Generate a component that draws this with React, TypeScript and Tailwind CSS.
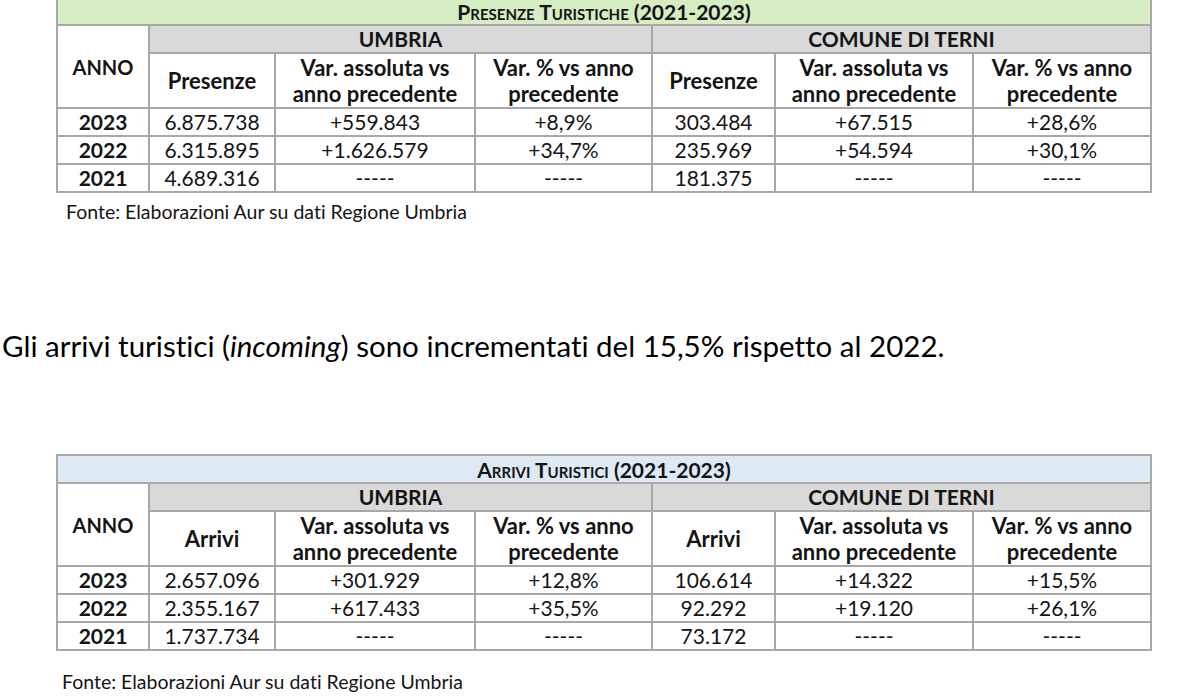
import React from 'react'

interface Row {
  anno: string
  values: string[]
}

interface TableData {
  title: string
  titleBg: string
  metric: string
  rows: Row[]
}

const presenze: TableData = {
  title: 'Presenze Turistiche (2021-2023)',
  titleBg: 'bg-[#d6ecc3]',
  metric: 'Presenze',
  rows: [
    { anno: '2023', values: ['6.875.738', '+559.843', '+8,9%', '303.484', '+67.515', '+28,6%'] },
    { anno: '2022', values: ['6.315.895', '+1.626.579', '+34,7%', '235.969', '+54.594', '+30,1%'] },
    { anno: '2021', values: ['4.689.316', '-----', '-----', '181.375', '-----', '-----'] }
  ]
}

const arrivi: TableData = {
  title: 'Arrivi Turistici (2021-2023)',
  titleBg: 'bg-[#ddeaf6]',
  metric: 'Arrivi',
  rows: [
    { anno: '2023', values: ['2.657.096', '+301.929', '+12,8%', '106.614', '+14.322', '+15,5%'] },
    { anno: '2022', values: ['2.355.167', '+617.433', '+35,5%', '92.292', '+19.120', '+26,1%'] },
    { anno: '2021', values: ['1.737.734', '-----', '-----', '73.172', '-----', '-----'] }
  ]
}

const cell = 'bg-white flex items-center justify-center text-center'

function SubHeaders({ metric }: { metric: string }) {
  return (
    <>
      <div className={`${cell} font-bold text-[22px]`}>{metric}</div>
      <div className={`${cell} font-bold text-[22px] leading-[26px]`}>
        Var. assoluta vs
        <br />
        anno precedente
      </div>
      <div className={`${cell} font-bold text-[22px] leading-[26px]`}>
        Var. % vs anno
        <br />
        precedente
      </div>
    </>
  )
}

function DataTable({ data }: { data: TableData }) {
  return (
    <div className="ml-[56px] w-[1096px] grid grid-cols-[90px_124px_198px_175px_121px_196px_176px] grid-rows-[26px_26px_53px_26px_26px_26px] gap-[2px] p-[2px] bg-[#a8a8a8] text-[21px] text-[#141414]">
      <div className={`col-span-7 ${data.titleBg} flex items-center justify-center pt-[2px] font-bold text-[21px] [font-variant:small-caps]`}>
        {data.title}
      </div>
      <div className={`${cell} row-span-2 font-bold text-[20px]`}>ANNO</div>
      <div className="col-span-3 bg-[#d9d9d9] flex items-center justify-center font-bold">UMBRIA</div>
      <div className="col-span-3 bg-[#d9d9d9] flex items-center justify-center font-bold">COMUNE DI TERNI</div>
      <SubHeaders metric={data.metric} />
      <SubHeaders metric={data.metric} />
      {data.rows.map((row) => (
        <React.Fragment key={row.anno}>
          <div className={`${cell} font-bold`}>{row.anno}</div>
          {row.values.map((v, i) => (
            <div key={i} className={cell}>
              {v}
            </div>
          ))}
        </React.Fragment>
      ))}
    </div>
  )
}

export default function App() {
  return (
    <div className="w-[1196px] h-[698px] overflow-hidden bg-white font-['Lato',sans-serif] text-[#141414] [font-variant-ligatures:none]">
      <div className="mt-[-4px]">
        <DataTable data={presenze} />
      </div>
      <p className="ml-[66px] mt-[9px] text-[19.5px] leading-[20px]">Fonte: Elaborazioni Aur su dati Regione Umbria</p>
      <p className="ml-[2px] mt-[108px] text-[29.5px] leading-[32px] text-black">
        Gli arrivi turistici (<i>incoming</i>) sono incrementati del 15,5% rispetto al 2022.
      </p>
      <div className="mt-[92px]">
        <DataTable data={arrivi} />
      </div>
      <p className="ml-[62px] mt-[21px] text-[19.5px] leading-[20px]">Fonte: Elaborazioni Aur su dati Regione Umbria</p>
    </div>
  )
}
